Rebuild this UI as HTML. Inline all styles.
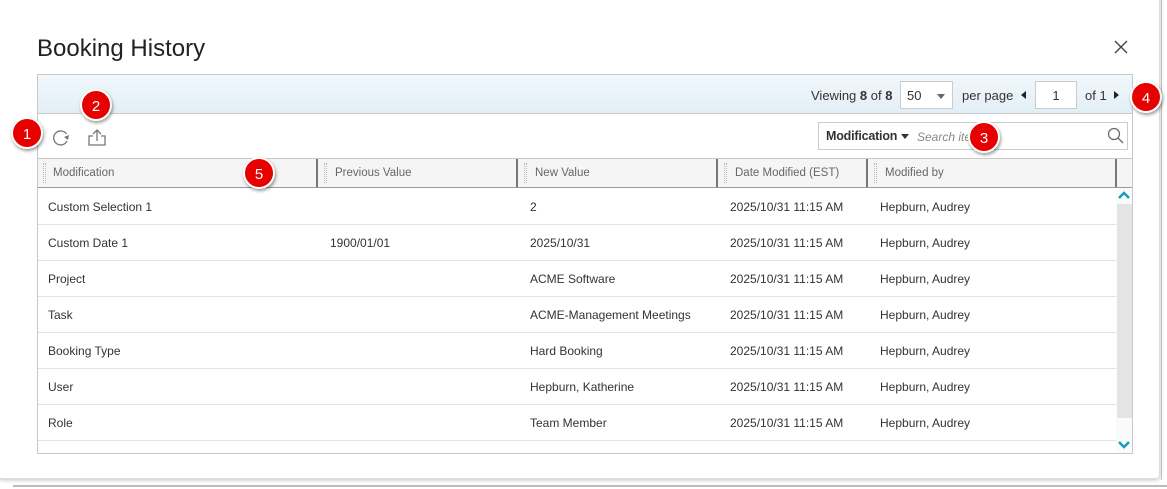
<!DOCTYPE html>
<html><head><meta charset="utf-8"><style>
*{box-sizing:border-box;margin:0;padding:0}
body{width:1167px;height:489px;background:#fff;position:relative;overflow:hidden;font-family:"Liberation Sans",sans-serif;color:#333}
.a{position:absolute}
.modal{left:-2px;top:-10px;width:1162px;height:489px;background:#fff;border:1px solid #ddd;border-radius:4px;box-shadow:0 1px 4px rgba(0,0,0,.25)}
.t{font-size:12px;color:#333;white-space:nowrap}
.h{font-size:11.5px;color:#666;white-space:nowrap}
.badge{width:32px;height:32px;border-radius:50%;background:#e60000;color:#fff;font-size:15px;text-align:center;line-height:31px;box-shadow:1px 2px 3px rgba(0,0,0,.4);border:2px solid #fff}
.grip{width:3px;height:20px;border-left:1px dotted #bbb;border-right:1px dotted #bbb}
.sep{width:2px;height:28px;background:#777}
.rl{left:38px;width:1078px;height:1px;background:#e3e3e3}
</style></head><body>
<div class="a" style="left:13px;top:485px;width:1154px;height:2px;background:#bbb"></div>
<div class="a" style="left:1161px;top:0;width:1px;height:480px;background:#ccc"></div>
<div class="a modal"></div>
<div class="a" style="left:37px;top:35px;font-size:24px;color:#222">Booking History</div>
<svg class="a" style="left:1114px;top:40px" width="14" height="14"><path d="M1 1L13 13M13 1L1 13" stroke="#444" stroke-width="1.4"/></svg>
<div class="a" style="left:37px;top:74px;width:1096px;height:380px;border:1px solid #c8c8c8"></div>
<div class="a" style="left:38px;top:75px;width:1094px;height:39px;background:linear-gradient(#f2f8fc,#e2eef6);border-bottom:1px solid #c6ccd0"></div>
<div class="a t" style="left:811px;top:88px;font-size:13px">Viewing <b>8</b> of <b>8</b></div>
<div class="a" style="left:900px;top:81px;width:53px;height:28px;background:#fff;border:1px solid #ccc;font-size:13px;padding:6px 0 0 6px">50<span style="position:absolute;left:36px;top:12px;border:4px solid transparent;border-top:5px solid #666"></span></div>
<div class="a t" style="left:962px;top:88px;font-size:13px">per page</div>
<div class="a" style="left:1021px;top:91px;border:4px solid transparent;border-right:5px solid #222;border-left:0"></div>
<div class="a" style="left:1035px;top:81px;width:42px;height:28px;background:#fff;border:1px solid #ccc;font-size:13px;text-align:center;padding-top:6px">1</div>
<div class="a t" style="left:1085px;top:88px;font-size:13px">of 1</div>
<div class="a" style="left:1114px;top:91px;border:4px solid transparent;border-left:5px solid #222;border-right:0"></div>
<svg class="a" style="left:51px;top:128px" width="20" height="20"><path d="M15.5 6A7 7 0 1 0 16 13" fill="none" stroke="#777" stroke-width="1.3"/><path d="M13 9L17 12L18 7Z" fill="#777"/></svg>
<svg class="a" style="left:87px;top:127px" width="20" height="20"><path d="M10 14V3M6 7L10 3L14 7M6 9H2V18H18V9H14" fill="none" stroke="#777" stroke-width="1.3"/></svg>
<div class="a" style="left:818px;top:122px;width:310px;height:28px;border:1px solid #ccc;background:#fff"></div>
<div class="a" style="left:826px;top:129px;font-size:12.5px;font-weight:bold;color:#333;letter-spacing:-0.2px">Modification</div>
<div class="a" style="left:901px;top:134px;border:4px solid transparent;border-top:5px solid #333"></div>
<div class="a" style="left:917px;top:130px;font-size:12px;font-style:italic;color:#888">Search ite</div>
<svg class="a" style="left:1107px;top:127px" width="18" height="18"><circle cx="7" cy="7" r="5.5" fill="none" stroke="#666" stroke-width="1.2"/><path d="M11 11L16 16" stroke="#666" stroke-width="1.3"/></svg>
<div class="a" style="left:38px;top:158px;width:1094px;height:30px;background:#f5f5f5;border-top:1px solid #c8c8c8;border-bottom:1px solid #999"></div>
<div class="a grip" style="left:43px;top:163px"></div><div class="a h" style="left:53px;top:167px">Modification</div>
<div class="a sep" style="left:316px;top:159px"></div><div class="a grip" style="left:324px;top:163px"></div><div class="a h" style="left:335px;top:167px">Previous Value</div>
<div class="a sep" style="left:516px;top:159px"></div><div class="a grip" style="left:524px;top:163px"></div><div class="a h" style="left:535px;top:167px">New Value</div>
<div class="a sep" style="left:716px;top:159px"></div><div class="a grip" style="left:724px;top:163px"></div><div class="a h" style="left:735px;top:167px">Date Modified (EST)</div>
<div class="a sep" style="left:866px;top:159px"></div><div class="a grip" style="left:874px;top:163px"></div><div class="a h" style="left:885px;top:167px">Modified by</div>
<div class="a sep" style="left:1115px;top:159px"></div>
<div class="a" style="left:1116px;top:188px;width:16px;height:265px;background:#fafafa"></div>
<div class="a" style="left:1117px;top:204px;width:15px;height:214px;background:#e4e4e4"></div>
<svg class="a" style="left:1117px;top:190px" width="14" height="10"><path d="M2 8L7 3L12 8" fill="none" stroke="#1a9bc7" stroke-width="2.5"/></svg>
<svg class="a" style="left:1117px;top:440px" width="14" height="10"><path d="M2 2L7 7L12 2" fill="none" stroke="#1a9bc7" stroke-width="2.5"/></svg>
<div class="a rl" style="top:224px"></div><div class="a rl" style="top:260px"></div><div class="a rl" style="top:296px"></div><div class="a rl" style="top:332px"></div><div class="a rl" style="top:368px"></div><div class="a rl" style="top:404px"></div><div class="a rl" style="top:440px"></div>
<div class="a t" style="left:48px;top:200px">Custom Selection 1</div><div class="a t" style="left:530px;top:200px">2</div><div class="a t" style="left:730px;top:200px">2025/10/31 11:15 AM</div><div class="a t" style="left:880px;top:200px">Hepburn, Audrey</div>
<div class="a t" style="left:48px;top:236px">Custom Date 1</div><div class="a t" style="left:330px;top:236px">1900/01/01</div><div class="a t" style="left:530px;top:236px">2025/10/31</div><div class="a t" style="left:730px;top:236px">2025/10/31 11:15 AM</div><div class="a t" style="left:880px;top:236px">Hepburn, Audrey</div>
<div class="a t" style="left:48px;top:272px">Project</div><div class="a t" style="left:530px;top:272px">ACME Software</div><div class="a t" style="left:730px;top:272px">2025/10/31 11:15 AM</div><div class="a t" style="left:880px;top:272px">Hepburn, Audrey</div>
<div class="a t" style="left:48px;top:308px">Task</div><div class="a t" style="left:530px;top:308px">ACME-Management Meetings</div><div class="a t" style="left:730px;top:308px">2025/10/31 11:15 AM</div><div class="a t" style="left:880px;top:308px">Hepburn, Audrey</div>
<div class="a t" style="left:48px;top:344px">Booking Type</div><div class="a t" style="left:530px;top:344px">Hard Booking</div><div class="a t" style="left:730px;top:344px">2025/10/31 11:15 AM</div><div class="a t" style="left:880px;top:344px">Hepburn, Audrey</div>
<div class="a t" style="left:48px;top:380px">User</div><div class="a t" style="left:530px;top:380px">Hepburn, Katherine</div><div class="a t" style="left:730px;top:380px">2025/10/31 11:15 AM</div><div class="a t" style="left:880px;top:380px">Hepburn, Audrey</div>
<div class="a t" style="left:48px;top:416px">Role</div><div class="a t" style="left:530px;top:416px">Team Member</div><div class="a t" style="left:730px;top:416px">2025/10/31 11:15 AM</div><div class="a t" style="left:880px;top:416px">Hepburn, Audrey</div>
<div class="a badge" style="left:11px;top:117px">1</div>
<div class="a badge" style="left:80px;top:89px">2</div>
<div class="a badge" style="left:968px;top:121px">3</div>
<div class="a badge" style="left:1130px;top:81px">4</div>
<div class="a badge" style="left:243px;top:157px">5</div>
</body></html>
